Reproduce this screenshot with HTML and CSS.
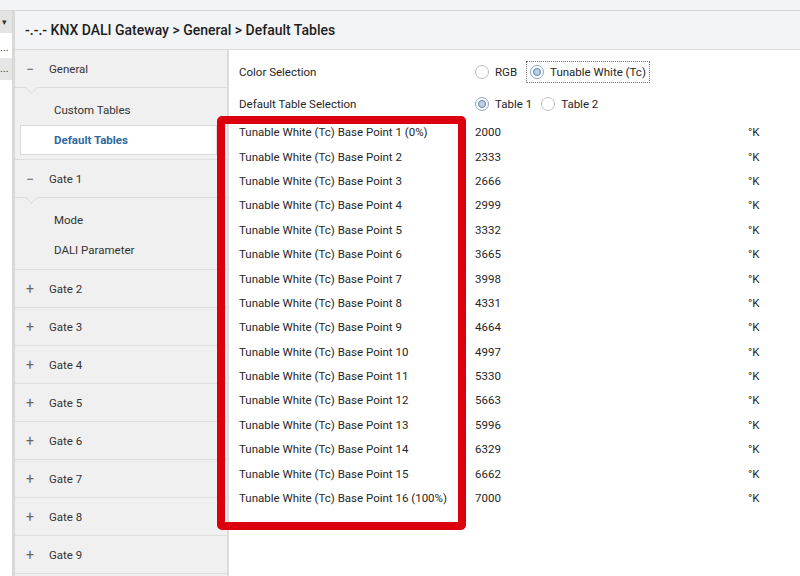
FILE: index.html
```html
<!DOCTYPE html>
<html lang="en">
  <head>
    <meta charset="UTF-8" />
    <title>KNX DALI Gateway - Default Tables</title>
    <link rel="stylesheet" href="styles.css">
  </head>
  <body>
    <div class="toolbar"></div>
    <div class="window">
      <div class="tree">
        <div class="tree-combo">&#9662;</div>
        <div class="tree-row">...</div>
        <div class="tree-row selected">...</div>
      </div>
      <div class="panel">
        <div class="breadcrumb">-.-.- KNX DALI Gateway &gt; General &gt; Default Tables</div>
        <div class="panel-body">
          <!-- parameter groups -->
          <nav class="sidebar">
            <div class="group open">
              <div class="group-head"><span class="toggle">&minus;</span>General</div>
              <div class="group-items">
                <div class="item">Custom Tables</div>
                <div class="item active">Default Tables</div>
              </div>
            </div>
            <div class="group open">
              <div class="group-head"><span class="toggle">&minus;</span>Gate 1</div>
              <div class="group-items">
                <div class="item">Mode</div>
                <div class="item">DALI Parameter</div>
              </div>
            </div>
            <div class="group"><div class="group-head"><span class="toggle">+</span>Gate 2</div></div>
            <div class="group"><div class="group-head"><span class="toggle">+</span>Gate 3</div></div>
            <div class="group"><div class="group-head"><span class="toggle">+</span>Gate 4</div></div>
            <div class="group"><div class="group-head"><span class="toggle">+</span>Gate 5</div></div>
            <div class="group"><div class="group-head"><span class="toggle">+</span>Gate 6</div></div>
            <div class="group"><div class="group-head"><span class="toggle">+</span>Gate 7</div></div>
            <div class="group"><div class="group-head"><span class="toggle">+</span>Gate 8</div></div>
            <div class="group"><div class="group-head"><span class="toggle">+</span>Gate 9</div></div>
          </nav>

          <!-- parameters of the selected page -->
          <main class="params">
            <div class="param choice">
              <div class="param-label">Color Selection</div>
              <div class="options">
                <label class="option"><span class="radio"></span>RGB</label>
                <label class="option focused"><span class="radio checked"></span>Tunable White (Tc)</label>
              </div>
            </div>
            <div class="param choice">
              <div class="param-label">Default Table Selection</div>
              <div class="options">
                <label class="option"><span class="radio checked"></span>Table 1</label>
                <label class="option"><span class="radio"></span>Table 2</label>
              </div>
            </div>
            <div class="param"><div class="param-label">Tunable White (Tc) Base Point 1 (0%)</div><div class="param-value">2000</div><div class="param-unit">°K</div></div>
            <div class="param"><div class="param-label">Tunable White (Tc) Base Point 2</div><div class="param-value">2333</div><div class="param-unit">°K</div></div>
            <div class="param"><div class="param-label">Tunable White (Tc) Base Point 3</div><div class="param-value">2666</div><div class="param-unit">°K</div></div>
            <div class="param"><div class="param-label">Tunable White (Tc) Base Point 4</div><div class="param-value">2999</div><div class="param-unit">°K</div></div>
            <div class="param"><div class="param-label">Tunable White (Tc) Base Point 5</div><div class="param-value">3332</div><div class="param-unit">°K</div></div>
            <div class="param"><div class="param-label">Tunable White (Tc) Base Point 6</div><div class="param-value">3665</div><div class="param-unit">°K</div></div>
            <div class="param"><div class="param-label">Tunable White (Tc) Base Point 7</div><div class="param-value">3998</div><div class="param-unit">°K</div></div>
            <div class="param"><div class="param-label">Tunable White (Tc) Base Point 8</div><div class="param-value">4331</div><div class="param-unit">°K</div></div>
            <div class="param"><div class="param-label">Tunable White (Tc) Base Point 9</div><div class="param-value">4664</div><div class="param-unit">°K</div></div>
            <div class="param"><div class="param-label">Tunable White (Tc) Base Point 10</div><div class="param-value">4997</div><div class="param-unit">°K</div></div>
            <div class="param"><div class="param-label">Tunable White (Tc) Base Point 11</div><div class="param-value">5330</div><div class="param-unit">°K</div></div>
            <div class="param"><div class="param-label">Tunable White (Tc) Base Point 12</div><div class="param-value">5663</div><div class="param-unit">°K</div></div>
            <div class="param"><div class="param-label">Tunable White (Tc) Base Point 13</div><div class="param-value">5996</div><div class="param-unit">°K</div></div>
            <div class="param"><div class="param-label">Tunable White (Tc) Base Point 14</div><div class="param-value">6329</div><div class="param-unit">°K</div></div>
            <div class="param"><div class="param-label">Tunable White (Tc) Base Point 15</div><div class="param-value">6662</div><div class="param-unit">°K</div></div>
            <div class="param"><div class="param-label">Tunable White (Tc) Base Point 16 (100%)</div><div class="param-value">7000</div><div class="param-unit">°K</div></div>
          </main>
        </div>
      </div>
    </div>

    <!-- red annotation frame drawn over the screenshot -->
    <div class="highlight"></div>
  </body>
</html>
```

FILE: styles.css
```css
/* Page frame */
body {
  margin: 0;
  width: 800px;
  height: 576px;
  overflow: hidden;
  font-family: Roboto, "Lato", sans-serif;
  font-size: 11.5px;
  color: #262626;
  background: #fff;
}

.toolbar {
  height: 10px;
  background: #f3f4f6;
  border-bottom: 1px solid #d6d7d9;
}

.window {
  display: flex;
  height: 565px;
}

/* Narrow project tree on the left, mostly cut off */
.tree {
  width: 12px;
  flex-shrink: 0;
  border-right: 3px solid #d9d9d9;
  background: #fff;
  font-size: 11px;
  overflow: hidden;
}

.tree-combo {
  height: 22px;
  line-height: 22px;
  padding-left: 2px;
  background: #e4e4e4;
  font-size: 9px;
  color: #333;
}

.tree-row {
  height: 25px;
  line-height: 30px;
  white-space: nowrap;
  color: #444;
}

.tree-row.selected {
  height: 22px;
  line-height: 22px;
  background: #e6e6e6;
}

.panel {
  flex: 1;
  display: flex;
  flex-direction: column;
  min-width: 0;
}

.breadcrumb {
  height: 38px;
  line-height: 38px;
  padding-left: 10px;
  background: #f3f4f6;
  border-bottom: 1px solid #d9dadc;
  font-size: 14px;
  font-weight: 500;
  color: #1e1e1e;
  white-space: nowrap;
}

.panel-body {
  flex: 1;
  display: flex;
  min-height: 0;
}

/* Parameter group navigation */
.sidebar {
  width: 212px;
  flex-shrink: 0;
  background: #f0f0f0;
  border-right: 2px solid #dcdcdc;
  overflow: hidden;
}

.group {
  border-bottom: 1px solid #dedede;
}

.group-head {
  position: relative;
  display: flex;
  align-items: center;
  height: 37px;
  padding-left: 10px;
  color: #333;
}

.group.open .group-head {
  border-bottom: 1px solid #dcdcdc;
}

/* small caret under an open group header */
.group.open .group-head::after {
  content: "";
  position: absolute;
  left: 12px;
  bottom: -5px;
  width: 8px;
  height: 8px;
  background: #f0f0f0;
  border-right: 1px solid #dcdcdc;
  border-bottom: 1px solid #dcdcdc;
  transform: rotate(45deg);
}

.toggle {
  width: 10px;
  margin-right: 14px;
  text-align: center;
  color: #666;
  font-size: 14px;
}

.group-items {
  padding: 7px 0 4px;
}

.item {
  height: 30px;
  line-height: 30px;
  padding-left: 39px;
  color: #333;
}

.item.active {
  margin: 0 10px 0 5px;
  padding-left: 33px;
  height: 28px;
  line-height: 28px;
  background: #fff;
  border: 1px solid #dadada;
  font-weight: 700;
  color: #2d6a9f;
}

/* Parameter list */
.params {
  flex: 1;
  padding: 10px 0 0 10px;
  background: #fff;
}

.param {
  display: flex;
  align-items: center;
  height: 24.4px;
  white-space: nowrap;
}

.param.choice {
  height: 24px;
  margin-bottom: 8px;
}

.param.choice + .param.choice {
  margin-bottom: 4px;
}

.param-label {
  width: 236px;
}

.param-value {
  width: 273px;
}

.options {
  display: flex;
  align-items: center;
  gap: 1px;
  margin-left: -4px;
}

.option {
  display: flex;
  align-items: center;
  gap: 6px;
  padding: 3px 3px;
  border: 1px dotted transparent;
}

.option.focused {
  margin-left: 4px;
  border-color: #777;
}

.radio {
  position: relative;
  width: 14px;
  height: 14px;
  border: 1px solid #bdbdbd;
  border-radius: 50%;
  background: #fff;
  box-sizing: border-box;
}

.radio.checked {
  border-color: #8ba5c4;
}

.radio.checked::after {
  content: "";
  position: absolute;
  left: 2px;
  top: 2px;
  width: 8px;
  height: 8px;
  border-radius: 50%;
  background: #bcd0e6;
  border: 1px solid #5d7fa8;
  box-sizing: border-box;
}

.highlight {
  position: absolute;
  left: 217px;
  top: 116px;
  width: 249px;
  height: 414px;
  border: 8px solid #dc000e;
  border-radius: 5px;
  box-sizing: border-box;
}
```
